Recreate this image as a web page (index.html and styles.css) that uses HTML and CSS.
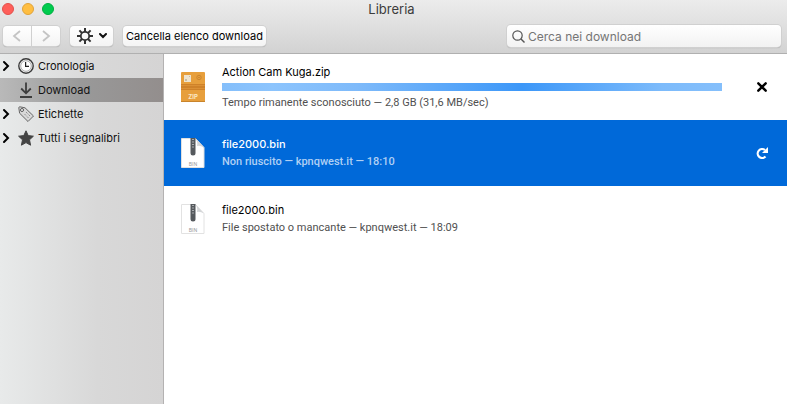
FILE: index.html
```html
<!DOCTYPE html>
<html lang="it">

<head>
    <meta charset="UTF-8">
    <meta name="viewport" content="width=device-width, initial-scale=1.0">
    <title>Libreria</title>
    <link rel="stylesheet" href="styles.css">
</head>

<body>
    <header class="header">
        <div class="titlebar">
            <div class="window-buttons">
                <button class="dot close" aria-label="Chiudi"></button>
                <button class="dot minimize" aria-label="Riduci"></button>
                <button class="dot maximize" aria-label="Ingrandisci"></button>
            </div>
            <h1 class="title">Libreria</h1>
        </div>
        <div class="toolbar">
            <div class="nav-group">
                <button class="btn nav-btn" aria-label="Indietro" disabled>
                    <svg width="10" height="14" viewBox="0 0 10 14"><path d="M8 2 2 7l6 5" fill="none" stroke="#c4c4c4" stroke-width="1.8"/></svg>
                </button>
                <button class="btn nav-btn" aria-label="Avanti" disabled>
                    <svg width="10" height="14" viewBox="0 0 10 14"><path d="M2 2l6 5-6 5" fill="none" stroke="#c4c4c4" stroke-width="1.8"/></svg>
                </button>
            </div>
            <button class="btn gear-btn" aria-label="Organizza">
                <svg width="16" height="16" viewBox="0 0 16 16">
                    <circle cx="8" cy="8" r="4.2" fill="none" stroke="#333" stroke-width="1.8"/>
                    <path d="M8 0v4M8 12v4M0 8h4M12 8h4M2.4 2.4l2.8 2.8M10.8 10.8l2.8 2.8M2.4 13.6l2.8-2.8M10.8 5.2l2.8-2.8" stroke="#333" stroke-width="2"/>
                </svg>
                <svg width="8" height="6" viewBox="0 0 8 6"><path d="M1 1l3 3 3-3" fill="none" stroke="#111" stroke-width="2" stroke-linecap="round"/></svg>
            </button>
            <button class="btn clear-btn">Cancella elenco download</button>
            <label class="search">
                <svg width="13" height="13" viewBox="0 0 13 13">
                    <circle cx="5.5" cy="5.5" r="4.7" fill="none" stroke="#555" stroke-width="1.2"/>
                    <path d="M9 9l3.5 3.5" stroke="#555" stroke-width="1.4"/>
                </svg>
                <input type="search" placeholder="Cerca nei download" aria-label="Cerca nei download">
            </label>
        </div>
    </header>

    <div class="main">
        <nav class="sidebar">
            <a href="#" class="place">
                <svg class="twisty" viewBox="0 0 8 12"><path d="M2 2l4 4-4 4" /></svg>
                <svg class="place-icon" viewBox="0 0 16 16">
                    <circle cx="8" cy="8" r="7.2" fill="#f4f4f4" stroke="#3a3a3a" stroke-width="1.4"/>
                    <circle cx="8" cy="8" r="5.3" fill="#fff" stroke="#999" stroke-width=".8"/>
                    <path d="M7.6 4v4.4H11" fill="none" stroke="#222" stroke-width="1.2"/>
                </svg>
                <span>Cronologia</span>
            </a>
            <a href="#" class="place selected">
                <span class="twisty"></span>
                <svg class="place-icon" viewBox="0 0 16 16">
                    <path d="M8 .5v11M3.2 6.5 8 11.3l4.8-4.8M2 15h12" fill="none" stroke="#3d3d3d" stroke-width="1.8"/>
                </svg>
                <span>Download</span>
            </a>
            <a href="#" class="place">
                <svg class="twisty" viewBox="0 0 8 12"><path d="M2 2l4 4-4 4" /></svg>
                <svg class="place-icon" viewBox="0 0 16 16">
                    <path d="M.8 1.8Q.8.8 1.8.8L7 1.8 15.5 10 10 15.5 1.6 7.2z" fill="#d8d8d8" stroke="#666" stroke-linejoin="round"/>
                    <circle cx="4" cy="4" r="1.5" fill="#fff" stroke="#555"/>
                    <path d="M8 6l1.500 1.500M10.500 8.500l1.500 1.500M6.500 8l1.500 1.500M9 10.500l1.500 1.500" stroke="#888" stroke-width=".9"/>
                </svg>
                <span>Etichette</span>
            </a>
            <a href="#" class="place">
                <svg class="twisty" viewBox="0 0 8 12"><path d="M2 2l4 4-4 4" /></svg>
                <svg class="place-icon" viewBox="0 0 16 16">
                    <path d="M8 .8l2.2 4.8 5.2.6-3.9 3.6 1.1 5.4L8 12.6l-4.6 2.6 1.1-5.4L.6 6.2l5.2-.6z" fill="#444" stroke="#444" stroke-linejoin="round"/>
                </svg>
                <span>Tutti i segnalibri</span>
            </a>
        </nav>

        <ul class="downloads">
            <li class="download">
                <svg class="file-icon" viewBox="0 0 24 30">
                    <rect width="24" height="30" rx="1" fill="#e79f3c"/>
                    <path d="M0 29.5h24" stroke="#c9842c"/>
                    <rect y="12" width="24" height="6" fill="#cf8229"/>
                    <path d="M0 13.5h24M0 16.5h24" stroke="#dc9136"/>
                    <rect x="3" y="3" width="7" height="7" fill="#eee3ce"/>
                    <path d="M4 7h2v2H4zM8 4h1v1H8z" fill="#c8bda7"/>
                    <circle cx="18" cy="5.5" r="2.2" fill="none" stroke="#cb852f"/>
                    <circle cx="18" cy="5.5" r=".7" fill="#bf7a26"/>
                    <text x="12" y="27" class="icon-label zip">ZIP</text>
                </svg>
                <div class="info">
                    <div class="name">Action Cam Kuga.zip</div>
                    <div class="progress" role="progressbar" aria-label="Action Cam Kuga.zip"></div>
                    <div class="details">Tempo rimanente sconosciuto — 2,8 GB (31,6 MB/sec)</div>
                </div>
                <button class="action" aria-label="Annulla">
                    <svg width="12" height="12" viewBox="0 0 12 12"><path d="M2.3 2.3l7.4 7.4M9.7 2.3 2.3 9.7" stroke="#000" stroke-width="2.4" stroke-linecap="round"/></svg>
                </button>
            </li>
            <li class="download selected">
                <svg class="file-icon" viewBox="0 0 24 30">
                    <path d="M.5.5h14l8.5 9v20H.5z" fill="#fff" stroke="#e0e0e0"/>
                    <path d="M14.5.5 23 9.5q-4-2.5-7-1.5 1-4-1.5-7.5z" fill="#d4d6d8"/>
                    <path d="M9.5 0h5v15q0 2.5-2.5 2.5T9.5 15z" fill="#55595d"/>
                    <path d="M12 1v10" stroke="#c2c5c8" stroke-width="1.5" stroke-dasharray="1 1.5"/>
                    <text x="12" y="28" class="icon-label">BIN</text>
                </svg>
                <div class="info">
                    <div class="name">file2000.bin</div>
                    <div class="details">Non riuscito — kpnqwest.it — 18:10</div>
                </div>
                <button class="action" aria-label="Riprova">
                    <svg width="12" height="12" viewBox="0 0 12 12">
                        <path d="M9.5 9.600A4.500 4.500 0 1 1 9 3" fill="none" stroke="#fff" stroke-width="2.200"/>
                        <path d="M12 0v6H6z" fill="#fff"/>
                    </svg>
                </button>
            </li>
            <li class="download">
                <svg class="file-icon" viewBox="0 0 24 30">
                    <path d="M.5.5h14l8.5 9v20H.5z" fill="#fff" stroke="#e2e2e2"/>
                    <path d="M14.5.5 23 9.5q-4-2.5-7-1.5 1-4-1.5-7.5z" fill="#d4d6d8"/>
                    <path d="M9.5 0h5v15q0 2.5-2.5 2.5T9.5 15z" fill="#55595d"/>
                    <path d="M12 1v10" stroke="#c2c5c8" stroke-width="1.5" stroke-dasharray="1 1.5"/>
                    <text x="12" y="28" class="icon-label">BIN</text>
                </svg>
                <div class="info">
                    <div class="name">file2000.bin</div>
                    <div class="details">File spostato o mancante — kpnqwest.it — 18:09</div>
                </div>
            </li>
        </ul>
    </div>
</body>

</html>
```

FILE: styles.css
```css
* {
    box-sizing: border-box;
}

body {
    margin: 0;
    min-height: 100vh;
    display: flex;
    flex-direction: column;
    font-family: Inter, "Liberation Sans", sans-serif;
    font-size: 11px;
    color: #000;
    background: #fff;
}

button,
input {
    font: inherit;
    color: inherit;
}

.header {
    background: linear-gradient(#ececec, #d2d2d2);
    border-bottom: 1px solid #b0b0b0;
}

.titlebar {
    display: grid;
    grid-template-columns: 1fr auto 1fr;
    align-items: center;
    height: 18px;
    padding-right: 4px;
}

.window-buttons {
    display: flex;
    gap: 8px;
    padding-left: 2px;
}

.dot {
    width: 12px;
    height: 12px;
    padding: 0;
    border: 1px solid;
    border-radius: 50%;
}

.close {
    background: #ff5f5a;
    border-color: #e2514c;
}

.minimize {
    background: #ffbe41;
    border-color: #e0a33a;
}

.maximize {
    background: #00cb4e;
    border-color: #00ae40;
}

.title {
    margin: 0;
    font-size: 13px;
    line-height: 18px;
    font-weight: 400;
    color: #3c3c3c;
}

.toolbar {
    display: flex;
    align-items: center;
    gap: 10px;
    padding: 7px 6px 6px 3px;
}

.btn {
    display: flex;
    align-items: center;
    justify-content: center;
    height: 20px;
    padding: 0;
    border: 0;
    border-radius: 4px;
    background: linear-gradient(#fff, #f4f4f4);
    box-shadow: 0 0 0 1px #d0d0d0, 0 1px 1px #999;
}

.nav-group {
    display: flex;
    gap: 1px;
}

.nav-btn {
    width: 28px;
}

.nav-btn:first-child {
    border-radius: 4px 0 0 4px;
}

.nav-btn:last-child {
    border-radius: 0 4px 4px 0;
}

.gear-btn {
    width: 43px;
    gap: 6px;
}

.clear-btn {
    padding: 0 3px;
    white-space: nowrap;
}

.search {
    display: flex;
    align-items: center;
    gap: 3px;
    flex: 0 1 274px;
    height: 22px;
    margin-left: auto;
    padding: 0 5px;
    border-radius: 4px;
    background: linear-gradient(#fff, #f2f2f2);
    box-shadow: 0 0 0 1px #d0d0d0, 0 1px 1px #999;
}

.search input {
    flex: 1;
    min-width: 0;
    padding: 0;
    border: 0;
    outline: 0;
    background: none;
    font-size: 12px;
}

.search input::placeholder {
    color: #757575;
}

.main {
    flex: 1;
    display: flex;
}

.sidebar {
    flex: none;
    width: 164px;
    border-right: 1px solid #b4b2b2;
    background: linear-gradient(90deg, #e8eaea, #d8d8d8 60%, #d5d4d4);
}

.place {
    display: flex;
    align-items: center;
    height: 24px;
    padding-left: 2px;
    color: #111;
    text-decoration: none;
}

.place.selected {
    background: linear-gradient(90deg, #b9b9b9, #999 50%, #938e8d);
}

.twisty {
    width: 8px;
    height: 12px;
    margin-right: 8px;
    fill: none;
    stroke: #000;
    stroke-width: 2;
    stroke-linecap: round;
}

.place-icon {
    width: 16px;
    height: 16px;
    margin-right: 4px;
}

.downloads {
    flex: 1;
    min-width: 0;
    margin: 0;
    padding: 0;
    list-style: none;
}

.download {
    display: flex;
    align-items: center;
    height: 66px;
    padding: 0 15px 0 17px;
}

.file-icon {
    flex: none;
    width: 24px;
    height: 30px;
    margin-right: 17px;
}

.icon-label {
    font-size: 5px;
    text-anchor: middle;
    fill: #999;
}

.icon-label.zip {
    font-size: 6px;
    font-weight: 700;
    fill: #fbe8c4;
}

.info {
    flex: 1;
    min-width: 0;
}

.name,
.details {
    line-height: 18px;
    white-space: nowrap;
}

.details {
    font-family: Roboto, sans-serif;
    color: #505050;
}

.progress {
    height: 8px;
    margin: 2px 0 3px;
    background: linear-gradient(90deg, #85bffb, #8cc4fd 10%, #7ebafa 27%, #3c97f8 60%, #7dbbfb 88%, #85bffb);
}

.action {
    display: flex;
    align-items: center;
    justify-content: center;
    width: 20px;
    height: 20px;
    margin-left: 30px;
    padding: 0;
    border: 0;
    background: none;
}

.download.selected {
    background: #0069d9;
}

.selected .name {
    font-weight: 500;
    color: #fff;
}

.selected .details {
    font-weight: 500;
    color: #b0d0f4;
}
```
